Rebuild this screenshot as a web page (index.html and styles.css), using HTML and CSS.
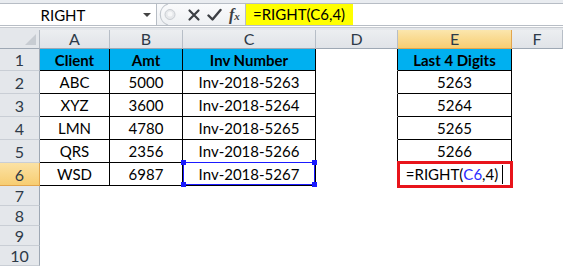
FILE: index.html
```html
<!DOCTYPE html>
<html lang="en">
<head>
  <meta charset="UTF-8" />
  <meta name="viewport" content="width=device-width, initial-scale=1" />
  <title>RIGHT function | Excel</title>
  <link rel="stylesheet" href="styles.css">
</head>
<body>

  <div class="bar">
    <div class="name-box">
      <span class="name">RIGHT</span>
      <span class="drop"></span>
    </div>
    <div class="bar-btns">
      <svg class="knob" width="20" height="21" viewBox="0 0 20 21">
        <path d="M9 0 A11 11 0 0 0 9 21" fill="none" stroke="#c3c8ce" stroke-width="1.2"/>
        <circle cx="11" cy="10.5" r="5" fill="#e6e8eb" stroke="#c9cdd2"/>
        <circle cx="11" cy="10" r="2.5" fill="#f6f7f8"/>
      </svg>
      <svg class="btn" width="14" height="14" viewBox="0 0 14 14">
        <path d="M2.5 2.5 L11.5 11.5 M11.5 2.5 L2.5 11.5" stroke="#3c3f44" stroke-width="2.2" stroke-linecap="round"/>
      </svg>
      <svg class="btn" width="15" height="14" viewBox="0 0 15 14">
        <path d="M1.5 7.5 L5.5 11.5 L13.5 2" fill="none" stroke="#3c3f44" stroke-width="2.4" stroke-linecap="round" stroke-linejoin="round"/>
      </svg>
      <span class="fx">f<small>x</small></span>
    </div>
    <div class="formula"><span class="hl">=RIGHT(C6,4)</span></div>
  </div>
  <div class="sep"></div>

  <div class="sheet">
    <div class="corner"><span class="tri"></span></div>
    <div class="ch">A</div>
    <div class="ch">B</div>
    <div class="ch">C</div>
    <div class="ch">D</div>
    <div class="ch sel">E</div>
    <div class="ch">F</div>

    <div class="rn">1</div>
    <div class="c t h">Client</div>
    <div class="c t h">Amt</div>
    <div class="c t h">Inv Number</div>
    <div class="c e"></div>
    <div class="c t h">Last 4 Digits</div>
    <div class="c"></div>

    <div class="rn">2</div>
    <div class="c t">ABC</div>
    <div class="c t">5000</div>
    <div class="c t">Inv-2018-5263</div>
    <div class="c e"></div>
    <div class="c t">5263</div>
    <div class="c"></div>

    <div class="rn">3</div>
    <div class="c t">XYZ</div>
    <div class="c t">3600</div>
    <div class="c t">Inv-2018-5264</div>
    <div class="c e"></div>
    <div class="c t">5264</div>
    <div class="c"></div>

    <div class="rn">4</div>
    <div class="c t">LMN</div>
    <div class="c t">4780</div>
    <div class="c t">Inv-2018-5265</div>
    <div class="c e"></div>
    <div class="c t">5265</div>
    <div class="c"></div>

    <div class="rn">5</div>
    <div class="c t">QRS</div>
    <div class="c t">2356</div>
    <div class="c t">Inv-2018-5266</div>
    <div class="c e"></div>
    <div class="c t">5266</div>
    <div class="c"></div>

    <div class="rn sel">6</div>
    <div class="c t">WSD</div>
    <div class="c t">6987</div>
    <div class="c t ref">Inv-2018-5267
      <span class="ref-box">
        <i class="hd tl"></i><i class="hd tr"></i><i class="hd bl"></i><i class="hd br"></i>
      </span>
    </div>
    <div class="c"></div>
    <div class="c edit">=RIGHT(<span class="arg">C6</span>,4)<span class="caret"></span>
      <span class="edit-box"></span>
    </div>
    <div class="c"></div>

    <div class="rn">7</div>
    <div class="c"></div><div class="c"></div><div class="c"></div><div class="c"></div><div class="c"></div><div class="c"></div>
    <div class="rn">8</div>
    <div class="c"></div><div class="c"></div><div class="c"></div><div class="c"></div><div class="c"></div><div class="c"></div>
    <div class="rn">9</div>
    <div class="c"></div><div class="c"></div><div class="c"></div><div class="c"></div><div class="c"></div><div class="c"></div>
    <div class="rn">10</div>
    <div class="c"></div><div class="c"></div><div class="c"></div><div class="c"></div><div class="c"></div><div class="c"></div>
  </div>

</body>
</html>
```

FILE: styles.css
```css
body {
  margin: 0;
  font-family: Lato, "Liberation Sans", sans-serif;
  background: #fff;
  color: #000;
  width: 563px;
  height: 266px;
  overflow: hidden;
}
* {
  box-sizing: border-box;
}

/* formula bar */
.bar {
  height: 25px;
  padding-top: 3px;
  background: #e9ecf0;
  display: flex;
}
.name-box {
  width: 157px;
  background: #fff;
  border-top: 1px solid #b7bdc5;
  border-right: 1px solid #b7bdc5;
  display: flex;
  align-items: center;
  position: relative;
}
.name {
  flex: 1;
  text-align: center;
  padding-right: 17px;
  font-size: 15px;
}
.drop {
  width: 0;
  height: 0;
  border-left: 4px solid transparent;
  border-right: 4px solid transparent;
  border-top: 4px solid #444;
  margin-right: 5px;
}
.bar-btns {
  width: 88px;
  border-top: 1px solid #b7bdc5;
  background: linear-gradient(#fafbfc, #eef0f3);
  display: flex;
  align-items: center;
  gap: 6px;
}
.knob {
  margin-left: 2px;
  margin-right: 2px;
}
.fx {
  font-family: "Liberation Serif", serif;
  font-style: italic;
  font-weight: bold;
  font-size: 16px;
  color: #3c3f44;
  margin-left: 1px;
}
.fx small {
  font-size: 11px;
}
.formula {
  flex: 1;
  background: #fff;
  border-top: 1px solid #b7bdc5;
  border-left: 1px solid #b7bdc5;
  display: flex;
}
.hl {
  background: #ffff00;
  font-size: 15px;
  line-height: 21px;
  padding: 0 8px 0 7px;
}
.sep {
  height: 5px;
  background: linear-gradient(#b7bdc5 0 1px, #fff 1px 2px, #c6cad0 2px 3px, #e4e7eb 3px);
}

/* sheet grid */
.sheet {
  display: grid;
  grid-template-columns: 40px 70px 73px 133px 82px 114px 51px;
  grid-template-rows: 19px 22px repeat(5, 23px) repeat(4, 20px);
}
.corner {
  background: #e4e7eb;
  border-right: 1px solid #b3bac3;
  border-bottom: 1px solid #9ea8b4;
  position: relative;
}
.tri {
  position: absolute;
  right: 3px;
  bottom: 3px;
  border-left: 11px solid transparent;
  border-bottom: 11px solid #c7ccd2;
}
.ch {
  background: linear-gradient(#eceef1, #e0e3e8);
  border-right: 1px solid #b7bec7;
  border-bottom: 1px solid #9ea8b4;
  color: #2e3a48;
  font-size: 16px;
  text-align: center;
  line-height: 18px;
}
.ch.sel {
  background: linear-gradient(#fbe6ad, #f7cd72);
  border-right-color: #e2a54d;
  border-bottom-color: #e2a54d;
}
.rn {
  background: #e4e7eb;
  border-right: 1px solid #9ea8b4;
  border-bottom: 1px solid #c9ced5;
  color: #2e3a48;
  font-size: 16px;
  display: flex;
  align-items: center;
  justify-content: center;
}
.rn.sel {
  background: linear-gradient(#fbe2a4, #f7cd72);
  border-bottom-color: #e2a54d;
  border-right-color: #e2a54d;
}
.c {
  border-right: 1px solid transparent;
  border-bottom: 1px solid transparent;
  font-size: 15px;
  display: flex;
  align-items: center;
  justify-content: center;
  position: relative;
}
.c.t {
  border-right-color: #000;
  border-bottom-color: #000;
}
.c.e {
  border-right-color: #000;
}
.c.h {
  background: #00b0f0;
  font-weight: bold;
}

/* selected reference C6 */
.ref-box {
  position: absolute;
  top: -1px;
  left: 0;
  right: 0;
  bottom: 0;
  border: 1px solid #1a1aff;
}
.hd {
  position: absolute;
  width: 5px;
  height: 5px;
  background: #1a1aff;
}
.hd.tl { top: -3px; left: -3px; }
.hd.tr { top: -3px; right: -3px; }
.hd.bl { bottom: -3px; left: -3px; }
.hd.br { bottom: -3px; right: -3px; }

/* cell being edited E6 */
.arg {
  color: #2b2bff;
}
.caret {
  width: 1px;
  height: 19px;
  background: #000;
  margin-left: 4px;
}
.edit-box {
  position: absolute;
  top: -2px;
  left: -1px;
  right: -2px;
  bottom: -3px;
  border: 3px solid #e8141b;
}
```
